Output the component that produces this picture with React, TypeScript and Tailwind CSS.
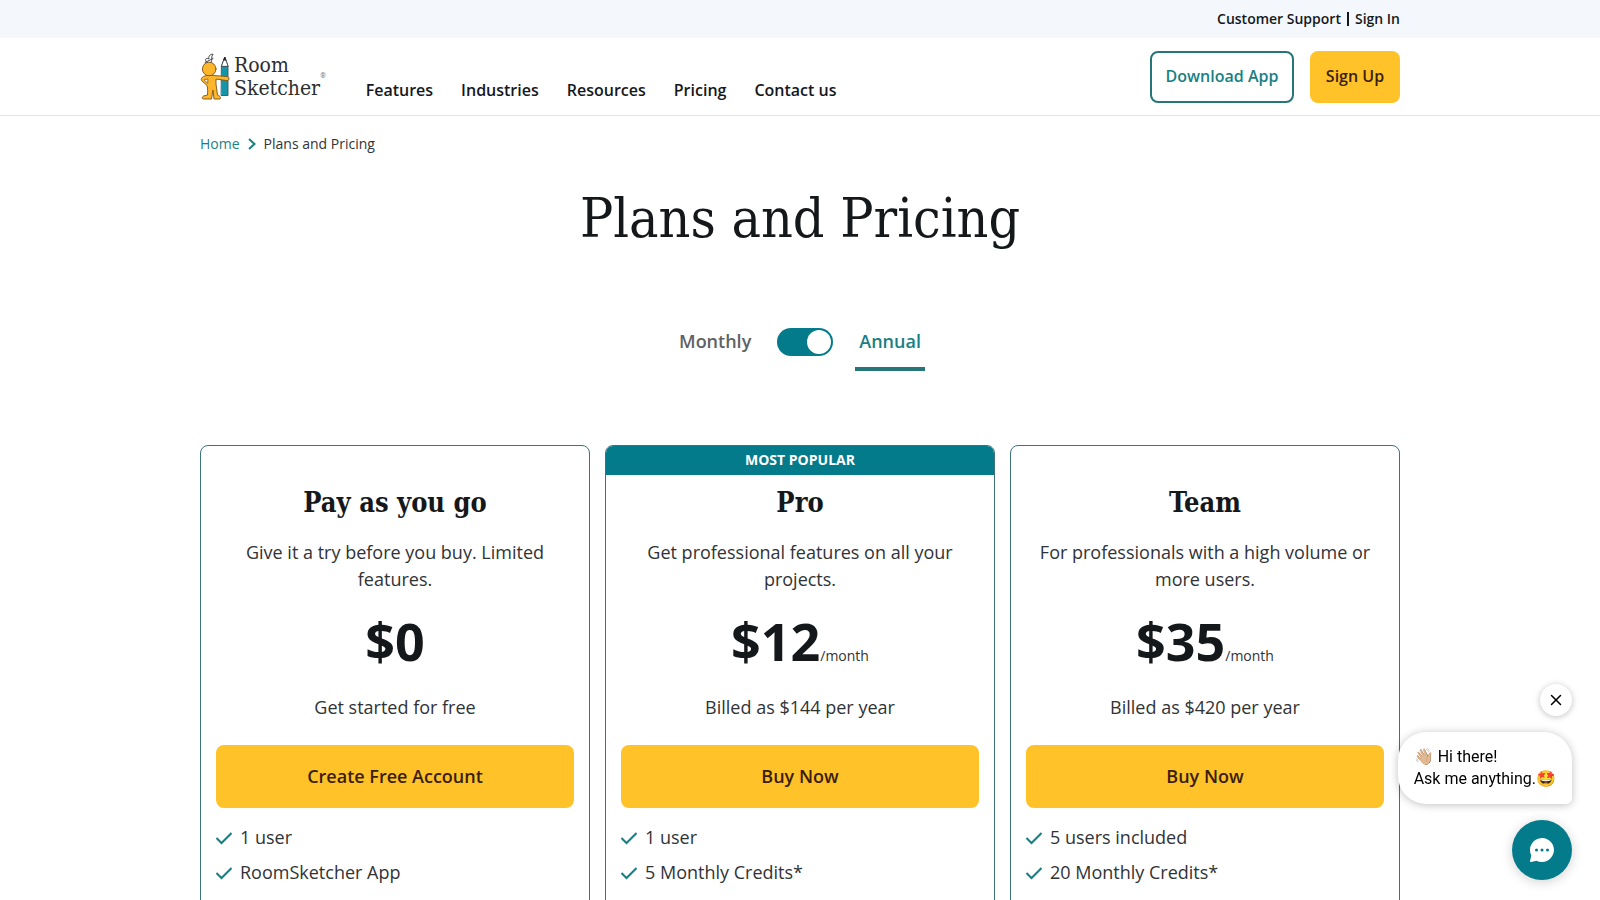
import React, { useState } from 'react'
import { X } from 'lucide-react'

type Plan = {
  name: string
  description: string
  price: string
  perMonth: boolean
  billing: string
  action: string
  popular?: boolean
  features: string[]
}

const navItems = ['Features', 'Industries', 'Resources', 'Pricing', 'Contact us']

const plans: Plan[] = [
  {
    name: 'Pay as you go',
    description: 'Give it a try before you buy. Limited features.',
    price: '$0',
    perMonth: false,
    billing: 'Get started for free',
    action: 'Create Free Account',
    features: ['1 user', 'RoomSketcher App'],
  },
  {
    name: 'Pro',
    description: 'Get professional features on all your projects.',
    price: '$12',
    perMonth: true,
    billing: 'Billed as $144 per year',
    action: 'Buy Now',
    popular: true,
    features: ['1 user', '5 Monthly Credits*'],
  },
  {
    name: 'Team',
    description: 'For professionals with a high volume or more users.',
    price: '$35',
    perMonth: true,
    billing: 'Billed as $420 per year',
    action: 'Buy Now',
    features: ['5 users included', '20 Monthly Credits*'],
  },
]

function Logo() {
  return (
    <a href="#" aria-label="RoomSketcher" className="flex items-center">
      <svg width="30" height="48" viewBox="0 0 30 48" fill="none" strokeLinecap="round" strokeLinejoin="round">
        {/* pencil */}
        <path d="M21.500 13 24.800 4 28 13V42.500H21.500Z" fill="#1795a8" stroke="#2f5a63" strokeWidth="0.900" />
        <path d="M21.500 13 24.800 4 28 13Z" fill="#fff" stroke="#444" strokeWidth="0.900" />
        <path d="M23.800 7 24.800 4 25.800 7Z" fill="#222" stroke="#222" strokeWidth="0.600" />
        {/* body, arm round the pencil */}
        <path
          d="M7 22.500C3 23 0.500 25 1.500 27.500L7 32.500C8 36 7.500 39 7.500 42L3.500 43C1.500 44.500 2 46 4 46H11.500L13 37 14 46H20C21.500 44 19 42.500 17.500 42L16 31V26L26 27.500C29.500 28.500 30 24 27 23.500L14 22.500Z"
          fill="#fdb62b"
          stroke="#7a5212"
          strokeWidth="0.900"
        />
        <path d="M7.500 26 4 26.800 7.500 30Z" fill="#fff" stroke="#7a5212" strokeWidth="0.700" />
        <circle cx="9.200" cy="16" r="6.800" fill="#fdb62b" stroke="#7a5212" strokeWidth="0.900" />
        {/* hair */}
        <path d="M7 9.500C4 7 6 4 9 6 8 2.500 11 1 13 1.200 10.500 4 13 6 11 9.500M5 9.500 13 5.500" stroke="#444" strokeWidth="1" />
      </svg>
      <span className="ml-1 font-['DejaVu_Serif_Condensed','DejaVu_Serif',serif] text-[21px] leading-[23px] text-[#2e2e2e]">
        Room
        <br />
        Sketcher
      </span>
      <span className="font-['Roboto',sans-serif] text-[7px] leading-[9px] text-[#777]">®</span>
    </a>
  )
}

function Header() {
  return (
    <header>
      <div className="bg-[#f4f8fc]">
        <div className="mx-auto flex h-[38px] max-w-[1200px] items-center justify-end gap-1.5 text-sm font-semibold">
          <a href="#">Customer Support</a>
          <span className="h-3.5 w-0.5 bg-[#15181b]" />
          <a href="#">Sign In</a>
        </div>
      </div>
      <div className="border-b border-[#dfe5e6]">
        <div className="mx-auto flex h-[77px] max-w-[1200px] items-center">
          <Logo />
          <nav className="ml-10 mt-[26px] flex gap-7 text-base font-semibold">
            {navItems.map((item) => (
              <a key={item} href="#" className="whitespace-nowrap">{item}</a>
            ))}
          </nav>
          <div className="ml-auto flex gap-4 text-base font-semibold">
            <a href="#" className="flex h-[52px] w-36 items-center justify-center rounded-lg border-2 border-[#267579] pb-0.5 text-[#197f83]">Download App</a>
            <a href="#" className="flex h-[52px] w-[90px] items-center justify-center rounded-lg bg-[#ffc229] pb-0.5 text-[#3b1d0c]">Sign Up</a>
          </div>
        </div>
      </div>
    </header>
  )
}

function PlanCard({ plan }: { plan: Plan }) {
  return (
    <section className="flex flex-col overflow-hidden rounded-lg border border-[#3b7578] text-center text-lg text-[#303336]">
      <div className={plan.popular ? 'h-[29px] bg-[#037b8b] text-sm leading-[27px] font-bold text-white' : 'h-[29px]'}>
        {plan.popular && 'MOST POPULAR'}
      </div>
      <div className="flex flex-col px-[15px] pb-16">
        <h2 className="mt-2 font-['DejaVu_Serif_Condensed','DejaVu_Serif',serif] text-[27px] leading-10 font-bold text-[#15181b]">{plan.name}</h2>
        <p className="mx-auto mt-4 max-w-[340px] leading-[27px]">{plan.description}</p>
        <p className="mt-4 leading-[64px]">
          <span className="text-[52px] font-bold text-[#15181b]">{plan.price}</span>
          {plan.perMonth && <span className="text-sm">/month</span>}
        </p>
        <p className="mt-2 leading-[27px]">{plan.billing}</p>
        <button type="button" className="mt-6 h-[63px] rounded-lg bg-[#ffc229] pb-0.5 font-semibold text-[#3b1d0c]">{plan.action}</button>
        <ul className="mt-4 flex flex-col gap-2 text-left leading-[27px]">
          {plan.features.map((feature) => (
            <li key={feature} className="flex items-center gap-2">
              <svg width="16" height="14" viewBox="0 0 16 14" fill="none" stroke="#197f83" strokeWidth="2">
                <path d="M0.500 7 5.500 12 15.500 2" />
              </svg>
              {feature}
            </li>
          ))}
        </ul>
      </div>
    </section>
  )
}

function ChatWidget() {
  const [open, setOpen] = useState(true)

  return (
    <div className="fixed right-7 bottom-5 flex flex-col items-end gap-4 font-['Roboto',sans-serif] text-base text-black">
      {open && (
        <>
          <button type="button" aria-label="Close" onClick={() => setOpen(false)} className="flex size-8 items-center justify-center rounded-full bg-white shadow-[0_1px_6px_rgba(0,0,0,0.25)]">
            <X size={18} strokeWidth={2} />
          </button>
          <p className="h-[72px] rounded-[28px] rounded-br-md bg-white px-4 pt-3.5 leading-[22px] shadow-[0_1px_8px_rgba(0,0,0,0.25)]">
            👋🏼 Hi there!
            <br />
            Ask me anything.🤩
          </p>
        </>
      )}
      <button type="button" aria-label="Open chat" className="flex size-[60px] items-center justify-center rounded-full bg-[#037b8b] shadow-[0_2px_12px_rgba(0,0,0,0.18)]">
        <svg width="26" height="26" viewBox="0 0 26 26">
          <path d="M13 1A12 12 0 1 1 7.500 23.700L2 25C1 25 0.800 24.500 1.100 23.800L2.300 18.500A12 12 0 0 1 13 1Z" fill="#fff" />
          <circle cx="7.500" cy="13" r="1.500" fill="#037b8b" />
          <circle cx="13" cy="13" r="1.500" fill="#037b8b" />
          <circle cx="18.500" cy="13" r="1.500" fill="#037b8b" />
        </svg>
      </button>
    </div>
  )
}

export default function App() {
  const [annual, setAnnual] = useState(true)

  return (
    <div className="bg-white font-['Open_Sans','Noto_Sans',sans-serif] text-[#15181b]">
      <Header />
      <main className="mx-auto max-w-[1200px]">
        <nav aria-label="Breadcrumb" className="flex h-14 items-center gap-2 text-sm">
          <a href="#" className="text-[#197f83]">Home</a>
          <svg width="8" height="12" viewBox="0 0 8 12" fill="none" stroke="#197f83" strokeWidth="2">
            <path d="M1 1 6.500 6 1 11" />
          </svg>
          <span className="text-[#303336]">Plans and Pricing</span>
        </nav>

        <h1 className="mt-3 text-center font-['DejaVu_Serif_Condensed','DejaVu_Serif',serif] text-[55px] leading-[68px]">Plans and Pricing</h1>

        <div className="mt-[63px] flex items-start justify-center gap-[22px] text-lg font-semibold">
          <span className={annual ? 'px-1 py-3 leading-7 text-[#5d6264]' : 'border-b-4 border-[#267579] px-1 py-3 leading-7 text-[#197f83]'}>Monthly</span>
          <button
            type="button"
            role="switch"
            aria-checked={annual}
            aria-label="Annual billing"
            onClick={() => setAnnual(!annual)}
            className={annual ? 'mt-[13px] flex h-7 w-14 items-center justify-end rounded-full bg-[#037b8b] p-0.5' : 'mt-[13px] flex h-7 w-14 items-center rounded-full bg-[#037b8b] p-0.5'}
          >
            <span className="size-6 rounded-full bg-white" />
          </button>
          <span className={annual ? 'border-b-4 border-[#267579] px-1 py-3 leading-7 text-[#197f83]' : 'px-1 py-3 leading-7 text-[#5d6264]'}>Annual</span>
        </div>

        <div className="mt-[74px] grid grid-cols-3 gap-[15px]">
          {plans.map((plan) => (
            <PlanCard key={plan.name} plan={plan} />
          ))}
        </div>
      </main>
      <ChatWidget />
    </div>
  )
}
